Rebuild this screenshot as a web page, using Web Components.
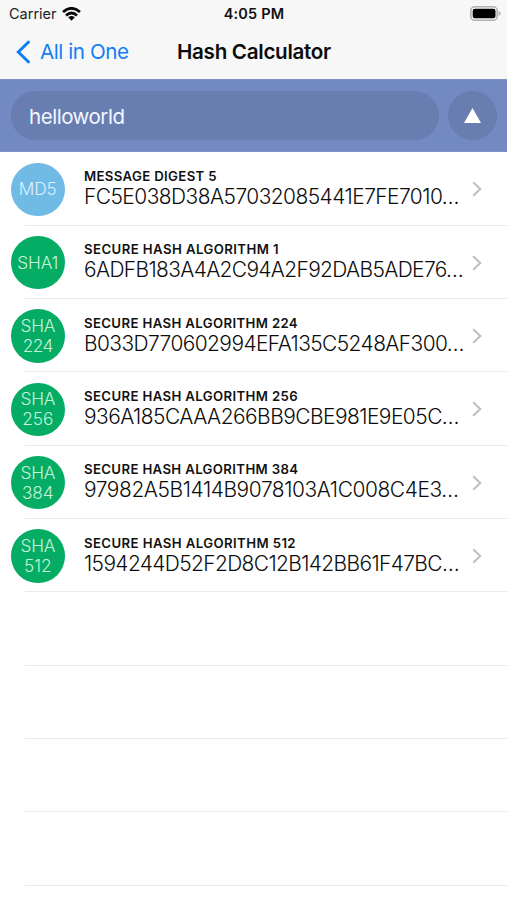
<!DOCTYPE html>
<html lang="en">
<head>
<meta charset="utf-8">
<title>Hash Calculator</title>
<style>
html,body{margin:0;height:100%;background:#fff;overflow:hidden}
body{font-family:Inter,"Liberation Sans",sans-serif;color:#111}
</style>
</head>
<body>
<hash-screen></hash-screen>
<script>
const define=(name,html,setup)=>customElements.define(name,class extends HTMLElement{
  connectedCallback(){
    if(this.shadowRoot)return;
    this.attachShadow({mode:'open'}).innerHTML=html;
    if(setup)setup(this,this.shadowRoot);
  }
});

/* One line of text whose tracking is adjusted to a given advance width. */
define('track-text','<style>:host{display:block;white-space:nowrap}span{display:inline-block}</style><span></span>',(el,root)=>{
  const s=root.querySelector('span'),t=el.getAttribute('text');
  s.textContent=t;
  const w=s.getBoundingClientRect().width;
  s.style.letterSpacing=(Number(el.getAttribute('width'))-w)/t.length+'px';
});

define('status-bar',`<style>
:host{display:grid;grid-template-columns:1fr auto 1fr;align-items:center;height:27px;padding:0 6px 0 9px;font-size:14.500px;line-height:27px;color:#222}
.l{display:flex;align-items:center;gap:5px}
.t{font-weight:600;padding-right:2px;color:#111}
.r{justify-self:end;display:block}
svg{display:block}
</style>
<div class="l"><track-text text="Carrier" width="47.5"></track-text>
<svg width="19" height="14" viewBox="0 0 19 14" fill="none" stroke="#080808" stroke-width="2.700"><path d="M1 5.100Q9.500-2.500 18 5.100M4 8.500Q9.500 3.500 15 8.500"/><path d="M6.200 10.300Q9.500 7.500 12.800 10.300L9.500 13.700Z" fill="#080808" stroke="none"/></svg></div>
<track-text class="t" text="4:05 PM" width="60.5"></track-text>
<svg class="r" width="31" height="15" viewBox="0 0 31 15"><rect x=".8" y=".8" width="26.400" height="13.400" rx="4" fill="#f7f7f7" stroke="#b0b0b0" stroke-width="1.600"/><rect x="2.700" y="2.700" width="22.800" height="9.600" rx="2.200" fill="#000"/><path d="M28.600 5.100Q30.700 5.800 30.700 7.500T28.600 9.900Z" fill="#b0b0b0"/></svg>`);

define('nav-bar',`<style>
:host{display:grid;grid-template-columns:177px auto 1fr;align-items:center;height:52px;line-height:50px;padding-bottom:2px;box-sizing:border-box;font-size:20.600px}
.b{display:flex;align-items:center;padding-left:16px;color:#117ff4}
.b svg{margin:0 9px 0 0}
.h{font-weight:600;color:#0c0c0c}
</style>
<div class="b"><svg width="15" height="24" viewBox="0 0 15 24" fill="none" stroke="#117ff4" stroke-width="3"><path d="M13.300 1.200L2.300 12L13.300 22.800"/></svg><track-text text="All in One" width="88.500"></track-text></div>
<track-text class="h" text="Hash Calculator" width="154"></track-text>`);

define('input-bar',`<style>
:host{display:flex;align-items:center;gap:9.500px;height:73.300px;padding:0 10px 0 10.500px;box-sizing:border-box;background:#7389c1;border-top:1px solid #8193c3;border-bottom:1px solid #7e91c5}
.f{flex:1;height:49px;line-height:51px;border-radius:25px;background:#687eb1;color:#f1f7ff;font-size:20.500px;padding-left:18.500px;box-sizing:border-box}
.u{width:49px;height:49px;border-radius:50%;background:#687eb1;display:grid;place-items:center}
svg{display:block}
</style><div class="f"><track-text text="helloworld" width="95.500"></track-text></div>
<div class="u"><svg width="17" height="15" viewBox="0 0 17 15"><path d="M8.500 0L17 15H0Z" fill="#fff"/></svg></div>`);

define('hash-badge',`<style>
:host{display:flex;flex-direction:column;align-items:center;justify-content:center;width:53.500px;height:53.500px;border-radius:50%;background:var(--badge,#05ac63);color:var(--ink,#c5f3dc);font-size:17.300px;font-weight:300;line-height:20px}
</style><slot></slot>`);

define('hash-row',`<style>
:host{display:flex;align-items:center;height:73.350px;box-sizing:border-box;padding:0 25.500px 0 11px;
background:linear-gradient(#e9e9eb,#e9e9eb) 25px 100%/100% 1.300px no-repeat}
.m{margin:0 0 2px 19.500px;flex:1;min-width:0}
.t{font-size:13.200px;font-weight:600;line-height:17px;color:#111}
.v{font-size:20.900px;font-weight:300;line-height:24px;color:#0c0c0c}
svg{display:block;flex:none}
</style><slot name="badge"></slot><div class="m"></div>`,(el,root)=>{
  const a=n=>el.getAttribute(n);
  if(!a('value')){root.querySelector('.m').remove();return;}
  root.querySelector('.m').innerHTML=`<track-text class="t" text="${a('name')}" width="${a('nw')}"></track-text><track-text class="v" text="${a('value')}" width="${a('vw')}"></track-text>`;
  root.querySelector('.m').insertAdjacentHTML('afterend','<svg width="10" height="16" viewBox="0 0 10 16" fill="none" stroke="#c1c1c4" stroke-width="2.200"><path d="M1.200 1.200L8.200 8L1.200 14.800"/></svg>');
});

define('hash-screen','<style>:host{display:block;height:900px;overflow:hidden}header{background:#f7f7f7}main{padding-top:.35px}</style><header><status-bar></status-bar><nav-bar></nav-bar></header><input-bar></input-bar><main></main>',(el,root)=>{
  const rows=[
    ['MD5','MESSAGE DIGEST 5',133,'FC5E038D38A57032085441E7FE7010…',375],
    ['SHA1','SECURE HASH ALGORITHM 1',195,'6ADFB183A4A2C94A2F92DAB5ADE76…',379],
    ['SHA 224','SECURE HASH ALGORITHM 224',214,'B033D770602994EFA135C5248AF300…',380],
    ['SHA 256','SECURE HASH ALGORITHM 256',214,'936A185CAAA266BB9CBE981E9E05C…',375],
    ['SHA 384','SECURE HASH ALGORITHM 384',214.5,'97982A5B1414B9078103A1C008C4E3…',374.5],
    ['SHA 512','SECURE HASH ALGORITHM 512',212,'1594244D52F2D8C12B142BB61F47BC…',375]];
  const bw={MD5:38,SHA1:41,SHA:34.5,224:30,256:31,384:31.5,512:27.5};
  root.querySelector('main').innerHTML=rows.map(([b,n,nw,v,vw])=>`<hash-row name="${n}" nw="${nw}" value="${v}" vw="${vw}"><hash-badge slot="badge"${b==='MD5'?' style="--badge:#70bae6;--ink:#dcf1ff"':''}>${b.split(' ').map(x=>`<track-text text="${x}" width="${bw[x]}"></track-text>`).join('')}</hash-badge></hash-row>`).join('')+'<hash-row></hash-row>'.repeat(5);
});
</script>
</body>
</html>
